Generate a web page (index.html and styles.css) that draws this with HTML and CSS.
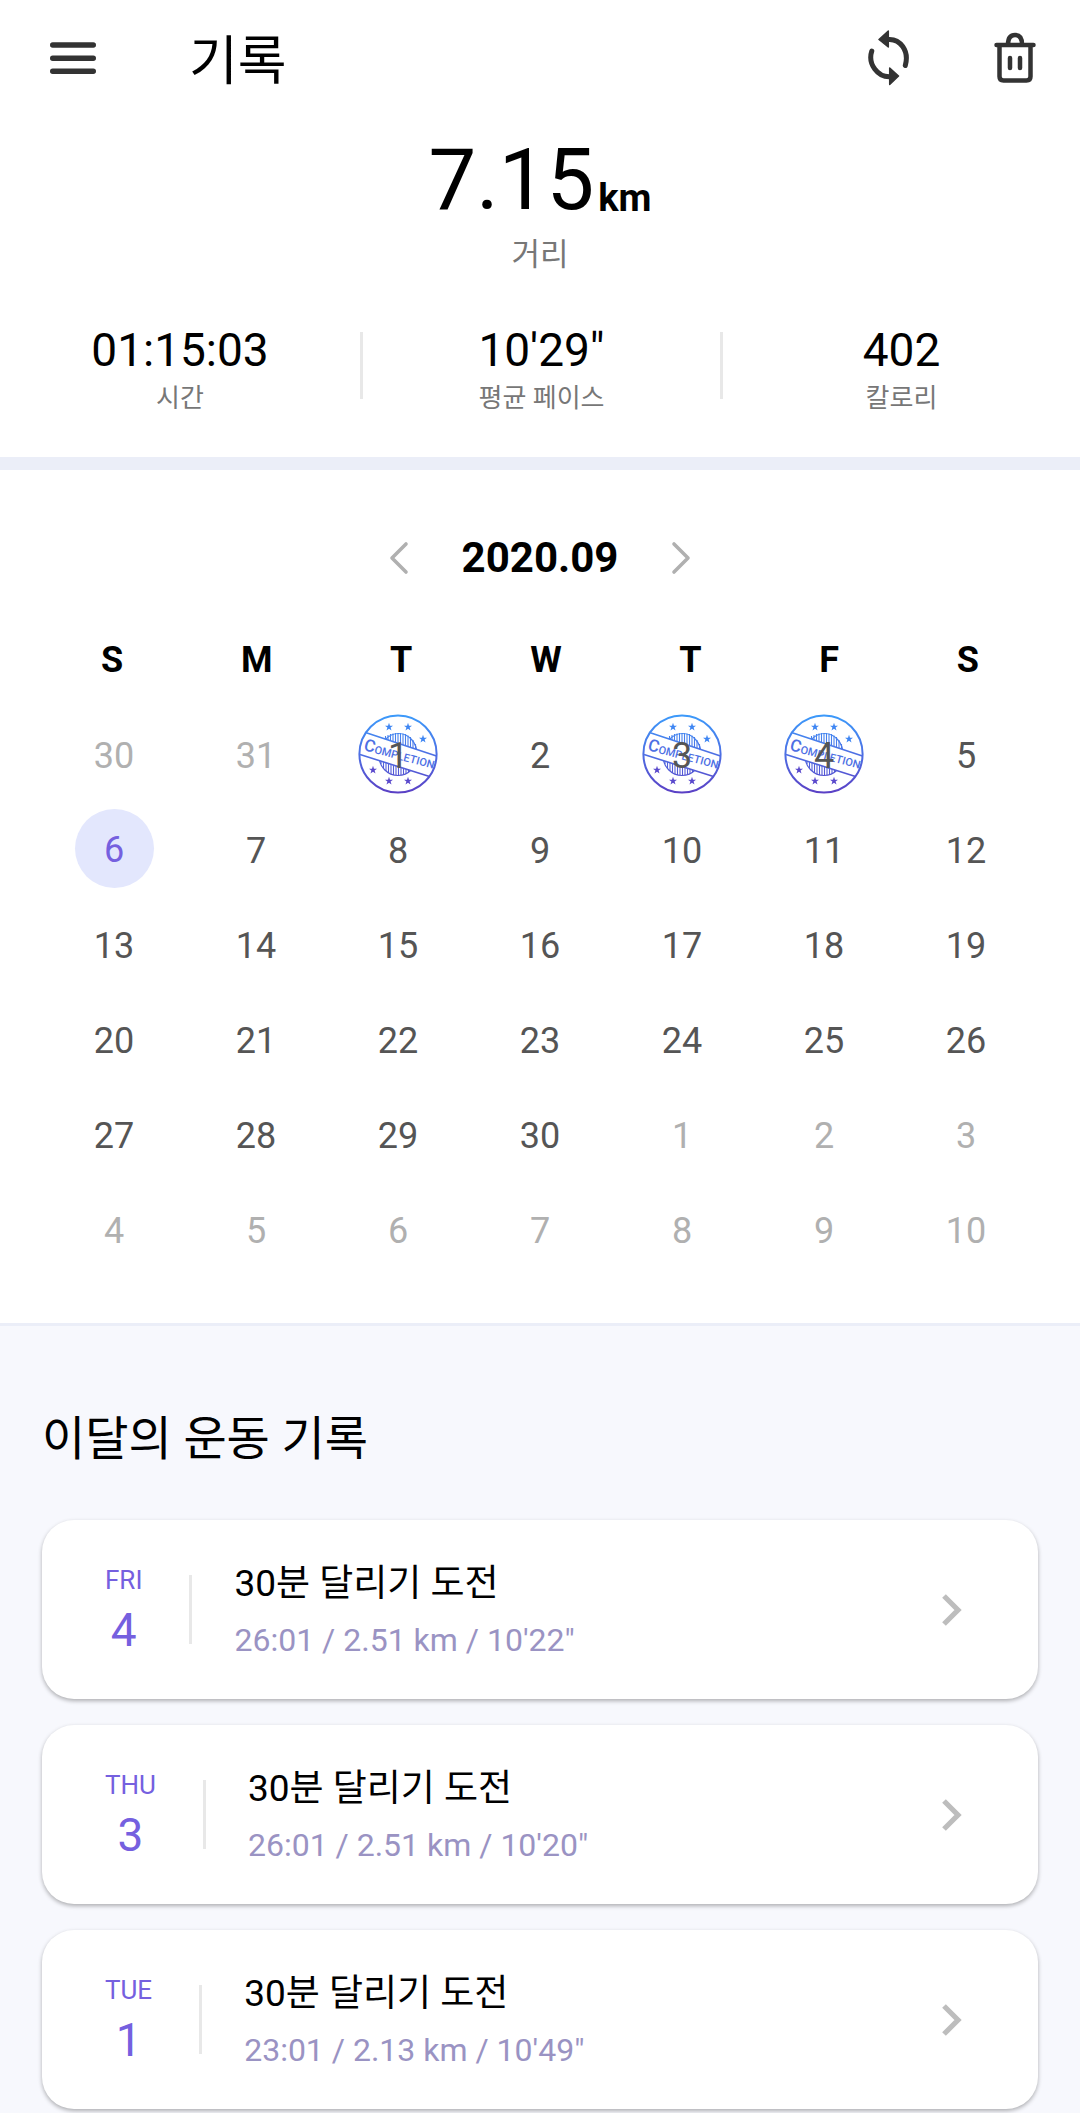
FILE: index.html
```html
<!DOCTYPE html>
<html lang="ko">
<head>
  <meta charset="UTF-8">
  <meta name="viewport" content="width=device-width, initial-scale=1.0">
  <title>기록</title>
  <link rel="stylesheet" href="styles.css">
</head>
<body>
  <!-- 완료 도장 -->
  <svg class="defs" width="0" height="0" aria-hidden="true">
    <defs>
      <linearGradient id="ink" gradientUnits="userSpaceOnUse" x1="0" y1="0" x2="0" y2="80">
        <stop offset="0" stop-color="#3b9bfb"/>
        <stop offset="0.5" stop-color="#4d6fe4"/>
        <stop offset="1" stop-color="#5b3fc4"/>
      </linearGradient>
      <clipPath id="seal-top"><path d="M0 0H80V42.6L0 16z"/></clipPath>
      <clipPath id="seal-bottom"><path d="M0 40L80 65V80H0z"/></clipPath>
      <path id="star" d="M0-4.2L1-1.3H4L1.6.5L2.5 3.5L0 1.7L-2.5 3.5L-1.6.5L-4-1.3H-1z"/>
      <symbol id="stamp" viewBox="0 0 80 80">
        <circle cx="40" cy="40" r="38.6" fill="none" stroke="url(#ink)" stroke-width="2"/>
        <g fill="none" stroke="url(#ink)">
          <g clip-path="url(#seal-top)">
            <path stroke-width="1.2" d="M22 40a18.500 20.500 0 0 1 37 0"/>
            <path stroke-width="1.1" d="M25 24v16M27.500 22v18M30 21v19M32.500 20v20M35 19.500v20M37.500 19v20M40 19v20M42.500 19v20M45 19.500v20M47.500 20v20M50 21.500v20M52.500 23v20M55 26v20M57.500 30v20"/>
          </g>
          <g clip-path="url(#seal-bottom)">
            <path stroke-width="1.2" d="M21 42a19 19.500 0 0 0 38 0"/>
            <path stroke-width="1.1" d="M23 40v10M25.500 40v15M28 40v17M30.500 40v19M33 40v20M35.500 40v21M38 40v21M40.500 40v21M43 40v21M45.500 40v20M48 40v20M50.500 40v18"/>
          </g>
          <path stroke-width="1.600" d="M7.500 18.500L78.500 42M2 40.500L71.500 62.500"/>
        </g>
        <text class="stamp-text" fill="#4d6fe4" transform="translate(5 36) rotate(15)"><tspan class="stamp-cap">C</tspan>OMPLETION</text>
        <g fill="#3f86f3">
          <use href="#star" x="31" y="13"/>
          <use href="#star" x="50" y="13"/>
          <use href="#star" x="65" y="25"/>
        </g>
        <g fill="#5a49cc">
          <use href="#star" x="15" y="56"/>
          <use href="#star" x="31" y="67"/>
          <use href="#star" x="50" y="67"/>
        </g>
      </symbol>
    </defs>
  </svg>

  <header class="topbar">
    <button type="button" class="icon-btn" aria-label="메뉴">
      <svg width="48" height="48" viewBox="0 0 48 48" fill="none" stroke="#333" stroke-width="5.400" stroke-linecap="round"><path d="M2.700 11h40.600M2.700 24.200h40.600M2.700 37.300h40.600"/></svg>
    </button>
    <h1 class="topbar-title">기록</h1>
    <button type="button" class="icon-btn" aria-label="새로고침">
      <svg width="44" height="56" viewBox="0 1 44 56">
        <path fill="none" stroke="#333" stroke-width="5" stroke-linecap="round" d="M21 10.500c12-1 21.500 11 17.300 26M4.800 22c-4.300 13 6 26.500 18.500 25.800"/>
        <path fill="#333" stroke="#333" stroke-width="1.500" stroke-linejoin="round" d="M21.300 2v16L12 10.500zM22.700 39v16.500L31.500 47z"/>
      </svg>
    </button>
    <button type="button" class="icon-btn" aria-label="삭제">
      <svg width="44" height="52" viewBox="0 0 44 52" fill="none" stroke="#333" stroke-width="4.500" stroke-linecap="round" stroke-linejoin="round">
        <path d="M3.500 13h37M6.500 13V44.500q0 4 4 4h23q4 0 4-4V13M15 12.500q0-9.500 7-9.500t7 9.500M17 26v10M27 26v10"/>
      </svg>
    </button>
  </header>

  <main>
    <section class="summary">
      <p class="distance">7.15<span class="unit">km</span></p>
      <p class="distance-label">거리</p>
      <dl class="stats">
        <div class="stat"><dt>시간</dt><dd>01:15:03</dd></div>
        <div class="stat"><dt>평균 페이스</dt><dd>10'29"</dd></div>
        <div class="stat"><dt>칼로리</dt><dd>402</dd></div>
      </dl>
    </section>

    <section class="calendar">
      <div class="month-nav">
        <button type="button" class="icon-btn" aria-label="이전 달">
          <svg width="20" height="34" viewBox="0 0 20 34" fill="none" stroke="#b0b0b0" stroke-width="3.600" stroke-linecap="round" stroke-linejoin="round"><path d="M17 3L3 17L17 31"/></svg>
        </button>
        <h2 class="month">2020.09</h2>
        <button type="button" class="icon-btn" aria-label="다음 달">
          <svg width="20" height="34" viewBox="0 0 20 34" fill="none" stroke="#b0b0b0" stroke-width="3.600" stroke-linecap="round" stroke-linejoin="round"><path d="M3 3L17 17L3 31"/></svg>
        </button>
      </div>
      <table class="days">
        <thead>
          <tr><th>S</th><th>M</th><th>T</th><th>W</th><th>T</th><th>F</th><th>S</th></tr>
        </thead>
        <tbody>
          <tr>
            <td class="other">30</td>
            <td class="other">31</td>
            <td class="done"><svg class="stamp"><use href="#stamp"/></svg><span>1</span></td>
            <td>2</td>
            <td class="done"><svg class="stamp"><use href="#stamp"/></svg><span>3</span></td>
            <td class="done"><svg class="stamp"><use href="#stamp"/></svg><span>4</span></td>
            <td>5</td>
          </tr>
          <tr><td class="today"><span>6</span></td><td>7</td><td>8</td><td>9</td><td>10</td><td>11</td><td>12</td></tr>
          <tr><td>13</td><td>14</td><td>15</td><td>16</td><td>17</td><td>18</td><td>19</td></tr>
          <tr><td>20</td><td>21</td><td>22</td><td>23</td><td>24</td><td>25</td><td>26</td></tr>
          <tr><td>27</td><td>28</td><td>29</td><td>30</td><td class="other">1</td><td class="other">2</td><td class="other">3</td></tr>
          <tr><td class="other">4</td><td class="other">5</td><td class="other">6</td><td class="other">7</td><td class="other">8</td><td class="other">9</td><td class="other">10</td></tr>
        </tbody>
      </table>
    </section>

    <section class="history">
      <h2 class="history-title">이달의 운동 기록</h2>
      <a href="#" class="card">
        <div class="card-date"><span class="dow">FRI</span><span class="day">4</span></div>
        <span class="card-line"></span>
        <div class="card-body">
          <h3>30분 달리기 도전</h3>
          <p>26:01 / 2.51 km / 10'22"</p>
        </div>
        <svg width="20" height="34" viewBox="0 0 20 34" fill="none" stroke="#bdbdbd" stroke-width="5.200"><path d="M2 3L16 17L2 31"/></svg>
      </a>
      <a href="#" class="card">
        <div class="card-date"><span class="dow">THU</span><span class="day">3</span></div>
        <span class="card-line"></span>
        <div class="card-body">
          <h3>30분 달리기 도전</h3>
          <p>26:01 / 2.51 km / 10'20"</p>
        </div>
        <svg width="20" height="34" viewBox="0 0 20 34" fill="none" stroke="#bdbdbd" stroke-width="5.200"><path d="M2 3L16 17L2 31"/></svg>
      </a>
      <a href="#" class="card">
        <div class="card-date"><span class="dow">TUE</span><span class="day">1</span></div>
        <span class="card-line"></span>
        <div class="card-body">
          <h3>30분 달리기 도전</h3>
          <p>23:01 / 2.13 km / 10'49"</p>
        </div>
        <svg width="20" height="34" viewBox="0 0 20 34" fill="none" stroke="#bdbdbd" stroke-width="5.200"><path d="M2 3L16 17L2 31"/></svg>
      </a>
    </section>
  </main>
</body>
</html>
```
FILE: styles.css
```css
:root {
  --purple: #7560df;
  --purple-light: #9a93c3;
  --band: #ebeef8;
  --background: #f7f8fd;
  --text-light: #777777;
  --line: #e8e8e8;
}

* {
  margin: 0;
  padding: 0;
  box-sizing: border-box;
}

body {
  background-color: #ffffff;
  color: #000000;
  font-family: Roboto, "Noto Sans CJK KR", sans-serif;
}

.defs {
  position: absolute;
}

.icon-btn {
  display: flex;
  background: none;
  border: none;
  cursor: pointer;
}

/* 상단 바 */
.topbar {
  display: flex;
  align-items: center;
  height: 116px;
  padding: 0 43px 0 50px;
}

.topbar-title {
  flex: 1;
  margin-left: 91px;
  padding-top: 8px;
  font-size: 53px;
  font-weight: 400;
  line-height: 64px;
}

.topbar .icon-btn + .icon-btn {
  margin-left: 82px;
}

/* 요약 */
.summary {
  padding-bottom: 58px;
  border-bottom: 13px solid var(--band);
  text-align: center;
}

.distance {
  display: flex;
  justify-content: center;
  align-items: flex-end;
  padding-top: 21px;
  font-size: 85px;
  line-height: 86px;
}

.unit {
  margin-left: 4px;
  font-size: 38px;
  font-weight: 700;
  line-height: 50px;
}

.distance-label {
  padding-top: 8px;
  color: var(--text-light);
  font-size: 31px;
  line-height: 48px;
}

.stats {
  display: grid;
  grid-template-columns: repeat(3, 1fr);
  padding-top: 53px;
}

.stat {
  display: flex;
  flex-direction: column-reverse;
  justify-content: flex-end;
  gap: 12px;
  height: 67px;
}

.stat + .stat {
  border-left: 3px solid var(--line);
}

.stat dt {
  color: var(--text-light);
  font-size: 26px;
  line-height: 36px;
}

.stat dd {
  font-size: 46px;
  line-height: 36px;
}

/* 달력 */
.calendar {
  padding: 60px 43px 47px;
  border-bottom: 3px solid var(--band);
}

.month-nav {
  display: flex;
  justify-content: center;
  align-items: center;
  gap: 53px;
}

.month {
  font-size: 42px;
  font-weight: 700;
  line-height: 56px;
}

.days,
.days thead,
.days tbody {
  display: block;
}

.days thead tr {
  display: flex;
  justify-content: space-between;
  padding: 50px 58px 22px;
}

.days th {
  font-size: 36px;
  line-height: 48px;
}

.days tbody tr {
  display: grid;
  grid-template-columns: repeat(7, 1fr);
}

.days td {
  display: flex;
  justify-content: center;
  align-items: center;
  height: 95px;
  padding-top: 4px;
  color: #555555;
  font-size: 36px;
}

.days .other {
  color: #b0b0b0;
}

.days .today {
  padding-top: 0;
}

.days .today span {
  width: 79px;
  padding-top: 4px;
  border-radius: 50%;
  background-color: #e3e7fd;
  color: var(--purple);
  line-height: 75px;
  text-align: center;
}

.days .done {
  position: relative;
}

.days .done span {
  z-index: 1;
}

.stamp {
  position: absolute;
  inset: 0;
  width: 80px;
  height: 80px;
  margin: auto;
}

.stamp-text {
  font-size: 11px;
  font-weight: 500;
}

.stamp-cap {
  font-size: 17px;
}

/* 이달의 기록 */
.history {
  padding: 81px 42px 4px;
  background-color: var(--background);
}

.history-title {
  margin-bottom: 49px;
  font-size: 47px;
  font-weight: 400;
  line-height: 64px;
}

.card {
  display: flex;
  align-items: center;
  height: 179px;
  margin-bottom: 26px;
  padding: 0 76px 0 63px;
  border-radius: 32px;
  background-color: #ffffff;
  box-shadow: 0 2px 4px rgba(0, 0, 0, 0.3);
  color: inherit;
  text-decoration: none;
}

.card:last-child {
  margin-bottom: 0;
}

.card-date {
  display: flex;
  flex-direction: column;
  align-items: center;
  padding-top: 4px;
  color: var(--purple);
}

.dow {
  font-size: 26px;
  line-height: 36px;
}

.day {
  font-size: 46px;
  line-height: 64px;
}

.card-line {
  width: 3px;
  height: 69px;
  margin: 0 42px 0 47px;
  background-color: var(--line);
}

.card-body {
  flex: 1;
  padding-top: 4px;
}

.card-body h3 {
  font-size: 37px;
  font-weight: 400;
  line-height: 56px;
}

.card-body p {
  color: var(--purple-light);
  font-size: 32px;
  line-height: 56px;
}
```
